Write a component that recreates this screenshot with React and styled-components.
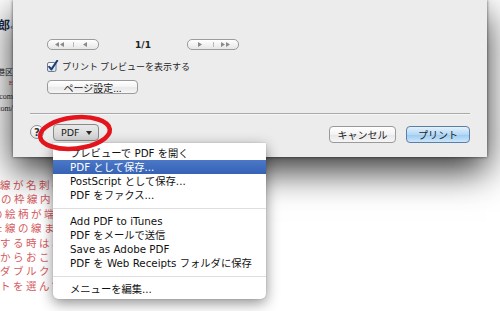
import React from 'react';
import styled, { createGlobalStyle } from 'styled-components';

const GlobalStyle = createGlobalStyle`
  html, body {
    margin: 0;
    padding: 0;
    background: #fff;
  }
  body {
    font-family: "DejaVu Sans", "Noto Sans CJK JP", sans-serif;
  }
`;

const Stage = styled.div`
  position: relative;
  width: 500px;
  height: 311px;
  overflow: hidden;
  background: #fff;
`;

/* document that lies behind the print sheet */
const Doc = styled.div`
  display: flex;
  flex-direction: column;
  padding-top: 19px;
`;

const Fragment = styled.div`
  width: 13px;
  overflow: hidden;
  display: flex;
  justify-content: flex-end;
  white-space: nowrap;
  margin-top: ${p => p.$gap || 0}px;
  font-family: "Liberation Serif", "Noto Sans CJK JP", serif;
  font-size: ${p => p.$size}px;
  line-height: ${p => p.$lh}px;
  font-weight: ${p => (p.$bold ? 700 : 400)};
  color: ${p => p.$color || '#2a2a2a'};
`;

const Accent = styled.span`
  color: #3c6fce;
  font-size: 9px;
`;

const RedNote = styled.div`
  margin-top: 64px;
  width: 80px;
  overflow: hidden;
  font-family: "Noto Sans CJK JP", sans-serif;
  font-size: 10.5px;
  line-height: 14.4px;
  letter-spacing: 2.5px;
  color: #d55a61;
`;

const RedLine = styled.div`
  white-space: nowrap;
  text-indent: ${p => p.$shift || 0}px;
`;

/* print sheet */
const Sheet = styled.div`
  position: absolute;
  left: 13px;
  top: 0;
  width: 474px;
  height: 157px;
  box-sizing: border-box;
  padding: 39px 17px 0;
  display: flex;
  flex-direction: column;
  background: #ececec;
  box-shadow: 0 14px 34px rgba(0, 0, 0, 0.8), 0 0 3px rgba(0, 0, 0, 0.6);
`;

const Options = styled.div`
  display: flex;
  flex-direction: column;
  align-items: flex-start;
  padding-left: 17px;
`;

const NavRow = styled.div`
  display: flex;
  align-items: center;
  height: 11px;
`;

const NavButton = styled.div`
  display: flex;
  width: 52px;
  height: 11px;
  box-sizing: border-box;
  border: 1px solid #9c9c9c;
  border-radius: 5px;
  background: linear-gradient(#ffffff, #e6e6e6);
`;

const NavHalf = styled.div`
  flex: 1;
  display: flex;
  align-items: center;
  justify-content: center;
  & + & {
    border-left: 1px solid #b8b8b8;
    margin: 2px 0;
  }
`;

const PageCount = styled.div`
  width: 88px;
  text-align: center;
  font-size: 9px;
  font-weight: 700;
  color: #222;
`;

const CheckRow = styled.div`
  display: flex;
  align-items: center;
  margin-top: 10px;
  height: 12px;
  gap: 2px;
`;

const Label = styled.span`
  font-family: "Noto Sans CJK JP", sans-serif;
  font-size: 9px;
  color: #1e1e1e;
  white-space: nowrap;
`;

const PushButton = styled.div`
  display: flex;
  align-items: center;
  justify-content: center;
  box-sizing: border-box;
  width: ${p => p.$w}px;
  height: ${p => p.$h || 17}px;
  margin-top: ${p => p.$top || 0}px;
  margin-left: ${p => p.$left || 0}px;
  border: 1px solid ${p => (p.$primary ? '#5d7ea5' : '#9a9a9a')};
  border-radius: 4px;
  background: ${p =>
    p.$primary
      ? 'linear-gradient(#e3f1fc 0%, #b4d8f5 50%, #9cccf2 55%, #cde6fa 100%)'
      : 'linear-gradient(#ffffff 0%, #f3f3f3 50%, #e8e8e8 55%, #f6f6f6 100%)'};
  font-family: "Noto Sans CJK JP", sans-serif;
  font-size: 10px;
  color: #1c1c1c;
  white-space: nowrap;
`;

const Divider = styled.div`
  margin-top: 19px;
  height: 1px;
  background: #a9a9a9;
  box-shadow: 0 1px 0 #f7f7f7;
`;

const BottomRow = styled.div`
  display: flex;
  align-items: flex-start;
  margin-top: 10px;
`;

const Help = styled.div`
  width: 14px;
  height: 14px;
  margin-top: 1px;
  box-sizing: border-box;
  border: 1px solid #8d8d8d;
  border-radius: 50%;
  background: linear-gradient(#ffffff, #e2e2e2);
  display: flex;
  align-items: center;
  justify-content: center;
  font-size: 10px;
  font-weight: 700;
  color: #333;
`;

const PopUp = styled.div`
  display: flex;
  align-items: center;
  justify-content: space-between;
  box-sizing: border-box;
  width: 46px;
  height: 17px;
  margin-left: 9px;
  padding: 0 6px 0 7px;
  border: 1px solid #8a8a8a;
  border-radius: 4px;
  background: linear-gradient(#e9e9e9, #d3d3d3);
  font-size: 9.5px;
  color: #1a1a1a;
`;

const Spacer = styled.div`
  flex: 1;
`;

/* pop-up menu */
const Menu = styled.div`
  position: absolute;
  left: 53px;
  top: 143px;
  width: 213px;
  padding: 3px 0;
  background: #fff;
  border-radius: 0 0 5px 5px;
  box-shadow: 0 4px 14px rgba(0, 0, 0, 0.45), 0 0 1px rgba(0, 0, 0, 0.4);
`;

const Item = styled.div`
  height: 14px;
  line-height: 14px;
  padding-left: 17px;
  font-size: 10.3px;
  white-space: nowrap;
  color: ${p => (p.$active ? '#fff' : '#111')};
  background: ${p => (p.$active ? 'linear-gradient(#4c78c8, #3562b5)' : 'transparent')};
`;

const Separator = styled.div`
  height: 12px;
  display: flex;
  align-items: center;
  &::after {
    content: '';
    flex: 1;
    height: 1px;
    background: #dedede;
  }
`;

const Annotation = styled.svg`
  position: absolute;
  left: 30px;
  top: 108px;
`;

const Tri = ({ dir = 'left', double }) => {
  const one = dir === 'left' ? 'M4 0 L4 5 L0 2.5 Z' : 'M0 0 L0 5 L4 2.5 Z';
  return (
    <svg width={double ? 10 : 5} height="5" viewBox={`0 0 ${double ? 10 : 5} 5`}>
      <path d={one} fill="#8a8a8a" />
      {double && <path d={one} transform="translate(5 0)" fill="#8a8a8a" />}
    </svg>
  );
};

const CheckBox = () => (
  <svg width="13" height="12" viewBox="0 0 13 12">
    <defs>
      <linearGradient id="cbg" x1="0" y1="0" x2="0" y2="1">
        <stop offset="0" stopColor="#ffffff" />
        <stop offset="1" stopColor="#d8dde6" />
      </linearGradient>
    </defs>
    <rect x="0.5" y="2.5" width="8.5" height="9" rx="1.5" fill="url(#cbg)" stroke="#6f7c90" />
    <path d="M2.2 6.8 L4.4 9.4 L10.2 0.8" fill="none" stroke="#1d3e78" strokeWidth="2" strokeLinecap="round" strokeLinejoin="round" />
  </svg>
);

const menuItems = [
  { label: 'プレビューで PDF を開く' },
  { label: 'PDF として保存...', active: true },
  { label: 'PostScript として保存...' },
  { label: 'PDF をファクス...' },
  { sep: true },
  { label: 'Add PDF to iTunes' },
  { label: 'PDF をメールで送信' },
  { label: 'Save as Adobe PDF' },
  { label: 'PDF を Web Receipts フォルダに保存' },
  { sep: true },
  { label: 'メニューを編集...' },
];

const redLines = [
  { text: '線が名刺の枠', shift: 0 },
  { text: 'の枠線内に', shift: 1 },
  { text: 'の絵柄が端', shift: -8 },
  { text: 'た線の線ま', shift: -8 },
  { text: 'する時は、', shift: 0 },
  { text: 'からおこな', shift: 0 },
  { text: 'ダブルクリ', shift: 0 },
  { text: 'トを選んで', shift: 0 },
];

export default function App() {
  return (
    <Stage>
      <GlobalStyle />
      <Doc>
        <Fragment $size={12} $lh={14} $bold $color="#1d2a48">
          太郎<Accent>‹</Accent>
        </Fragment>
        <Fragment $gap={35} $size={8} $lh={10}>東京都港区</Fragment>
        <Fragment $gap={1} $size={7} $lh={8} $color="#c4323a">E</Fragment>
        <Fragment $gap={5} $size={8} $lh={10}>www.com</Fragment>
        <Fragment $gap={2} $size={8} $lh={10}>http://com/</Fragment>
        <RedNote>
          {redLines.map(l => (
            <RedLine key={l.text} $shift={l.shift}>{l.text}</RedLine>
          ))}
        </RedNote>
      </Doc>

      <Sheet>
        <Options>
          <NavRow>
            <NavButton>
              <NavHalf><Tri dir="left" double /></NavHalf>
              <NavHalf><Tri dir="left" /></NavHalf>
            </NavButton>
            <PageCount>1/1</PageCount>
            <NavButton>
              <NavHalf><Tri dir="right" /></NavHalf>
              <NavHalf><Tri dir="right" double /></NavHalf>
            </NavButton>
          </NavRow>
          <CheckRow>
            <CheckBox />
            <Label>プリント プレビューを表示する</Label>
          </CheckRow>
          <PushButton $w={91} $h={14} $top={8}>ページ設定...</PushButton>
        </Options>
        <Divider />
        <BottomRow>
          <Help>?</Help>
          <PopUp>
            PDF
            <svg width="6" height="4" viewBox="0 0 6 4">
              <path d="M0 0 L6 0 L3 4 Z" fill="#2a2a2a" />
            </svg>
          </PopUp>
          <Spacer />
          <PushButton $w={67} $top={2}>キャンセル</PushButton>
          <PushButton $w={64} $top={2} $left={10} $primary>プリント</PushButton>
        </BottomRow>
      </Sheet>

      <Menu>
        {menuItems.map((m, i) =>
          m.sep ? <Separator key={i} /> : <Item key={i} $active={m.active}>{m.label}</Item>
        )}
      </Menu>

      <Annotation width="90" height="50" viewBox="0 0 90 50">
        <ellipse cx="45" cy="25" rx="35" ry="15.5" fill="none" stroke="#e3141c" strokeWidth="4.5" transform="rotate(-6 45 25)" />
      </Annotation>
    </Stage>
  );
}
